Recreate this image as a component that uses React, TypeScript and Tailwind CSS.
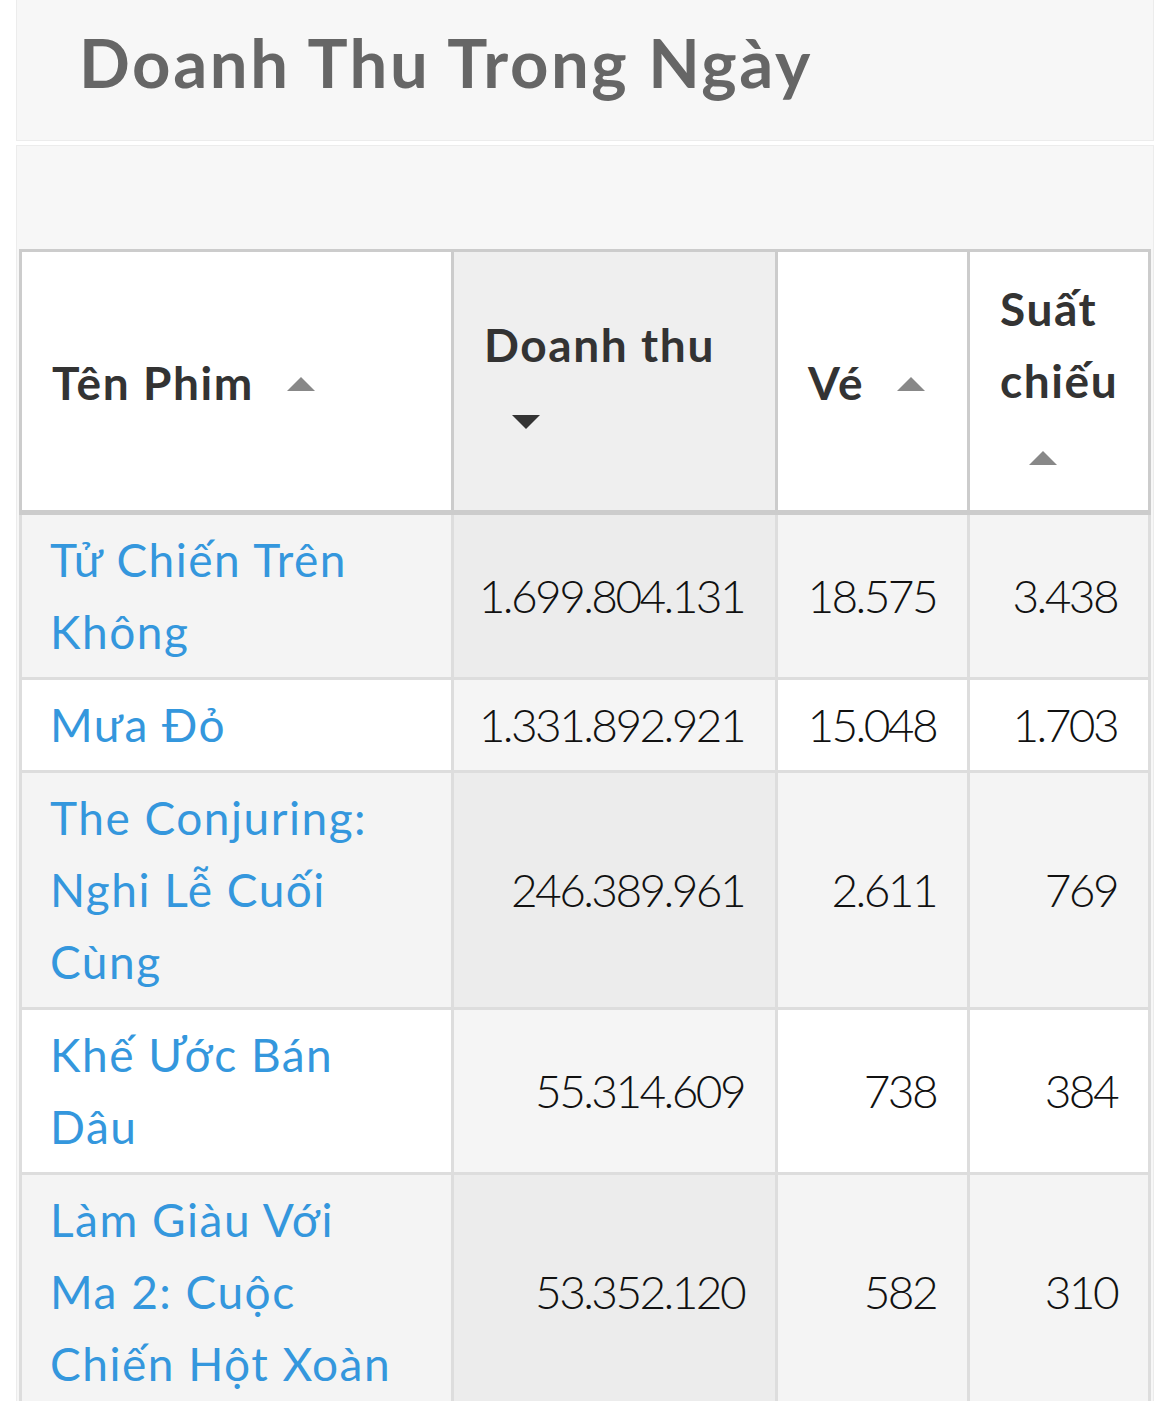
import React from "react";

type Row = {
    name: string[];
    revenue: string;
    tickets: string;
    shows: string;
};

const rows: Row[] = [
    { name: ["Tử Chiến Trên", "Không"], revenue: "1.699.804.131", tickets: "18.575", shows: "3.438" },
    { name: ["Mưa Đỏ"], revenue: "1.331.892.921", tickets: "15.048", shows: "1.703" },
    { name: ["The Conjuring:", "Nghi Lễ Cuối", "Cùng"], revenue: "246.389.961", tickets: "2.611", shows: "769" },
    { name: ["Khế Ước Bán", "Dâu"], revenue: "55.314.609", tickets: "738", shows: "384" },
    { name: ["Làm Giàu Với", "Ma 2: Cuộc", "Chiến Hột Xoàn"], revenue: "53.352.120", tickets: "582", shows: "310" },
];

const ArrowUp = () => (
    <svg width="30" height="16" viewBox="0 0 30 16" className="inline-block">
        <path d="M15 1 L29 15 L1 15 Z" fill="#888888" />
    </svg>
);

const ArrowDown = () => (
    <svg width="30" height="16" viewBox="0 0 30 16" className="inline-block">
        <path d="M1 1 L29 1 L15 15 Z" fill="#333333" />
    </svg>
);

export default function App() {
    return (
        <div
            className="min-h-[1401px] bg-white overflow-hidden"
            style={{ fontFamily: "Lato, 'Noto Sans', sans-serif" }}
        >
            <div className="mx-4 h-[141px] bg-[#f7f7f7] border border-t-0 border-[#ececec] flex items-center pl-[62px] pb-4">
                <h1 className="text-[67px] font-bold text-[#666666] tracking-[2.6px] leading-none">
                    Doanh Thu Trong Ngày
                </h1>
            </div>

            <div className="mx-4 mt-1 bg-[#f7f7f7] border border-b-0 border-[#ececec] pt-[103px] px-[2px]">
                <table className="w-full table-fixed border-collapse border-[3px] border-[#cccccc] text-[46px] leading-[72px]">
                    <colgroup>
                        <col className="w-[432px]" />
                        <col className="w-[324px]" />
                        <col className="w-[192px]" />
                        <col />
                    </colgroup>
                    <thead>
                        <tr className="text-[#333333] font-bold tracking-[1.6px]">
                            <th className="bg-white border-[3px] border-[#cccccc] border-b-[5px] text-left align-middle pl-[30px] pr-4 py-[21px] font-bold">
                                <span>Tên Phim</span>
                                <span className="ml-8 align-[4px]">
                                    <ArrowUp />
                                </span>
                            </th>
                            <th className="bg-[#efefef] border-[3px] border-[#cccccc] border-b-[5px] text-left align-middle pl-[30px] pr-4 py-[21px] font-bold">
                                <div>Doanh thu</div>
                                <div className="pl-[27px]">
                                    <ArrowDown />
                                </div>
                            </th>
                            <th className="bg-white border-[3px] border-[#cccccc] border-b-[5px] text-left align-middle pl-[30px] pr-4 py-[21px] font-bold">
                                <span>Vé</span>
                                <span className="ml-8 align-[4px]">
                                    <ArrowUp />
                                </span>
                            </th>
                            <th className="bg-white border-[3px] border-[#cccccc] border-b-[5px] text-left align-middle pl-[30px] pr-4 py-[21px] font-bold">
                                <div>Suất</div>
                                <div>chiếu</div>
                                <div className="pl-[28px]">
                                    <ArrowUp />
                                </div>
                            </th>
                        </tr>
                    </thead>
                    <tbody>
                        {rows.map((r, i) => {
                            const odd = i % 2 === 0;
                            return (
                                <tr key={i} className={odd ? "bg-[#f4f4f4]" : "bg-white"}>
                                    <td className="border-[3px] border-[#dddddd] pl-[28px] pr-2 py-[9px] align-middle">
                                        <a href="#" className="text-[#3497dd] font-normal tracking-[1.5px] whitespace-nowrap">
                                            {r.name.map((line, j) => (
                                                <React.Fragment key={j}>
                                                    {j > 0 && <br />}
                                                    {line}
                                                </React.Fragment>
                                            ))}
                                        </a>
                                    </td>
                                    <td
                                        className={`border-[3px] border-[#dddddd] text-right pr-[31px] py-[9px] align-middle text-[#111111] font-light tracking-[-2.6px] ${odd ? "bg-[#ececec]" : "bg-[#f5f5f5]"}`}
                                    >
                                        {r.revenue}
                                    </td>
                                    <td className="border-[3px] border-[#dddddd] text-right pr-[31px] py-[9px] align-middle text-[#111111] font-light tracking-[-2.6px]">
                                        {r.tickets}
                                    </td>
                                    <td className="border-[3px] border-[#dddddd] text-right pr-[31px] py-[9px] align-middle text-[#111111] font-light tracking-[-2.6px]">
                                        {r.shows}
                                    </td>
                                </tr>
                            );
                        })}
                    </tbody>
                </table>
            </div>
        </div>
    );
}
